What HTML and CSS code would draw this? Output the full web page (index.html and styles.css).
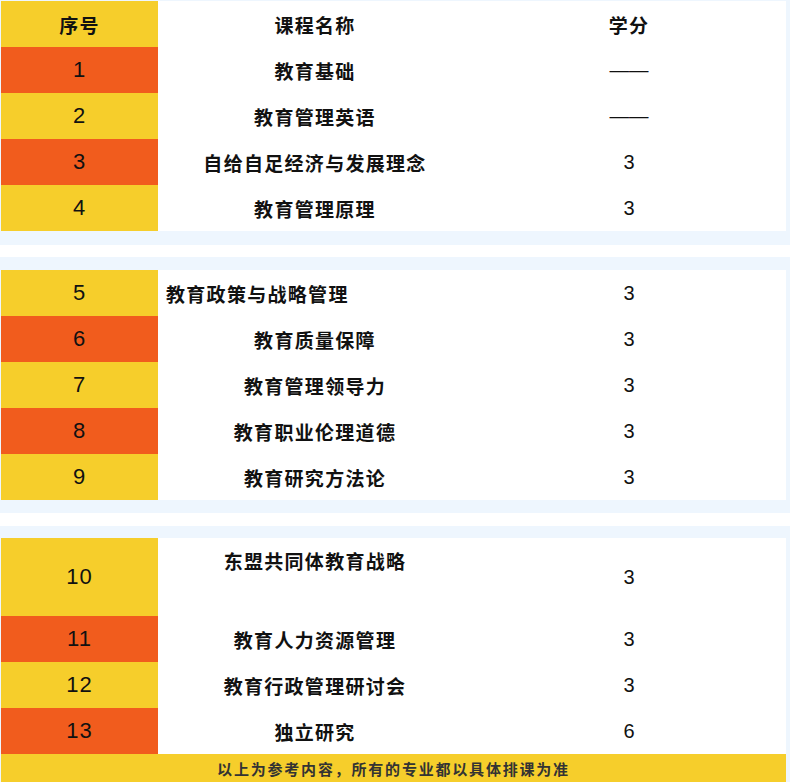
FILE: index.html
```html
<!DOCTYPE html>
<html lang="zh-CN">
<head>
<meta charset="utf-8">
<title>课程列表</title>
<link rel="stylesheet" href="styles.css">
</head>
<body>
<div class="block block-first">
  <table class="courses">
    <colgroup><col class="c-no"><col class="c-name"><col class="c-credit"></colgroup>
    <tr><td class="no yellow cjk">序号</td><td class="name">课程名称</td><td class="credit cjk">学分</td></tr>
    <tr><td class="no orange">1</td><td class="name">教育基础</td><td class="credit dash">——</td></tr>
    <tr><td class="no yellow">2</td><td class="name">教育管理英语</td><td class="credit dash">——</td></tr>
    <tr><td class="no orange">3</td><td class="name">自给自足经济与发展理念</td><td class="credit">3</td></tr>
    <tr><td class="no yellow">4</td><td class="name">教育管理原理</td><td class="credit">3</td></tr>
  </table>
</div>
<div class="block block-mid">
  <table class="courses">
    <colgroup><col class="c-no"><col class="c-name"><col class="c-credit"></colgroup>
    <tr><td class="no yellow">5</td><td class="name left">教育政策与战略管理</td><td class="credit">3</td></tr>
    <tr><td class="no orange">6</td><td class="name">教育质量保障</td><td class="credit">3</td></tr>
    <tr><td class="no yellow">7</td><td class="name">教育管理领导力</td><td class="credit">3</td></tr>
    <tr><td class="no orange">8</td><td class="name">教育职业伦理道德</td><td class="credit">3</td></tr>
    <tr><td class="no yellow">9</td><td class="name">教育研究方法论</td><td class="credit">3</td></tr>
  </table>
</div>
<div class="block block-last">
  <table class="courses">
    <colgroup><col class="c-no"><col class="c-name"><col class="c-credit"></colgroup>
    <tr class="tall"><td class="no yellow">10</td><td class="name twoline">东盟共同体教育战略<br>&nbsp;</td><td class="credit">3</td></tr>
    <tr><td class="no orange">11</td><td class="name">教育人力资源管理</td><td class="credit">3</td></tr>
    <tr><td class="no yellow">12</td><td class="name">教育行政管理研讨会</td><td class="credit">3</td></tr>
    <tr><td class="no orange">13</td><td class="name">独立研究</td><td class="credit">6</td></tr>
    <tr><td colspan="3" class="footer">以上为参考内容，所有的专业都以具体排课为准</td></tr>
  </table>
</div>
</body>
</html>
```

FILE: styles.css
```css
html, body {
  margin: 0;
  padding: 0;
  background: #ffffff;
}

body {
  font-family: "Noto Sans CJK SC", "Noto Sans", sans-serif;
  color: #111111;
  width: 790px;
}

.block {
  background: #eef6fe;
  padding: 0 4px 0 1px;
}

.block-first {
  padding-top: 1px;
  padding-bottom: 14px;
  margin-bottom: 12px;
}

.block-mid {
  padding-top: 13px;
  padding-bottom: 13px;
  margin-bottom: 13px;
}

.block-last {
  padding-top: 12px;
}

.courses {
  width: 785px;
  border-collapse: collapse;
  table-layout: fixed;
  background: #ffffff;
}

.c-no { width: 157px; }
.c-name { width: 314px; }
.c-credit { width: 314px; }

.courses td {
  height: 46px;
  padding: 0;
  text-align: center;
  vertical-align: middle;
}

.courses tr.tall td {
  height: 78px;
}

.yellow { background: #f6ce2b; }
.orange { background: #f15c1d; }

.no {
  font-family: "Liberation Sans", "Noto Sans", sans-serif;
  font-size: 22px;
  color: #111111;
  letter-spacing: 1px;
  padding-top: 2px;
}

.no.cjk,
.credit.cjk {
  font-family: "Noto Sans CJK SC", sans-serif;
  font-size: 19px;
  font-weight: 600;
  letter-spacing: 1.3px;
}

.name {
  font-size: 19px;
  font-weight: 600;
  letter-spacing: 1.3px;
  color: #111111;
}

.name.left {
  text-align: left;
  padding-left: 8px;
}

.name.twoline {
  line-height: 32px;
}

.credit {
  font-family: "Liberation Sans", sans-serif;
  font-size: 20px;
  color: #111111;
}

.credit.dash {
  font-family: "Liberation Sans", sans-serif;
  font-size: 19.5px;
  letter-spacing: 0;
}

.courses td.footer {
  height: 29px;
  background: #f6ce2b;
  font-size: 15px;
  font-weight: 600;
  letter-spacing: 1.8px;
  color: #333333;
}
```
